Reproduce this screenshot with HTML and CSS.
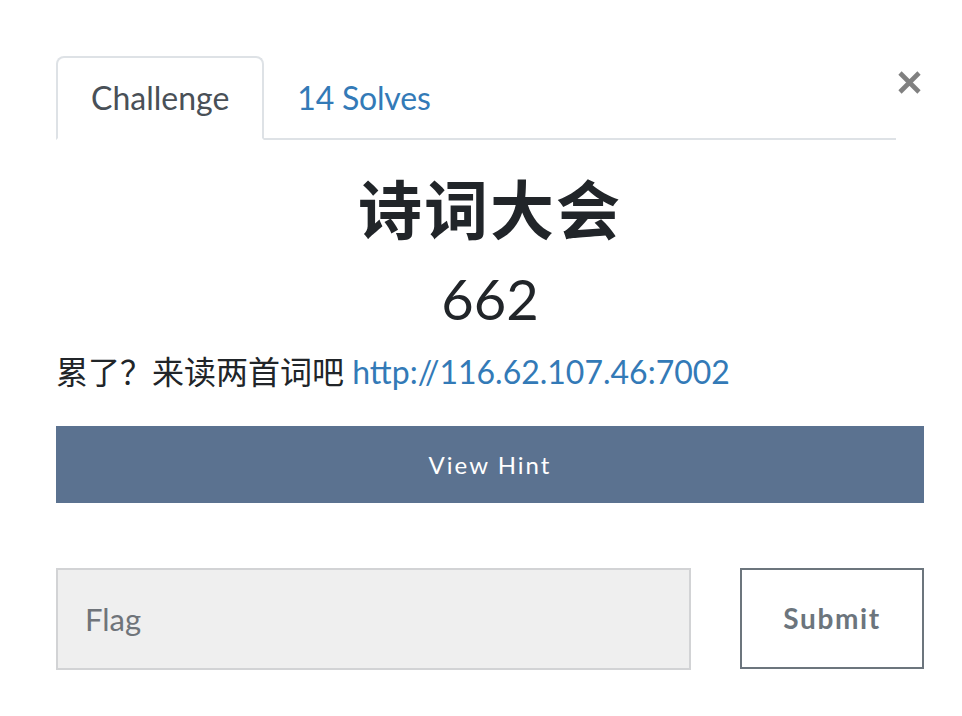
FILE: index.html
```html
<!DOCTYPE html>
<html>
<head>
    <meta charset="utf-8" />
    <title>诗词大会</title>
    <link rel="stylesheet" href="styles.css">
</head>
<body>
    <div class="modal">
        <div class="top">
            <ul class="tabs">
                <li class="tab active">Challenge</li>
                <li class="tab"><a href="#solves">14 Solves</a></li>
            </ul>
            <button class="close" aria-label="Close">
                <svg width="23" height="23" viewBox="0 0 23 23">
                    <path d="M2 2 L21 21 M21 2 L2 21" stroke="#808080" stroke-width="4.6" stroke-linecap="butt" fill="none" />
                </svg>
            </button>
        </div>

        <h2 class="challenge-name">诗词大会</h2>
        <h3 class="challenge-value">662</h3>
        <p class="challenge-desc">累了？来读两首词吧 <a href="http://116.62.107.46:7002">http://116.62.107.46:7002</a></p>

        <button class="hint">View Hint</button>

        <div class="submit-row">
            <input class="flag" type="text" placeholder="Flag">
            <button class="submit">Submit</button>
        </div>
    </div>
</body>
</html>
```

FILE: styles.css
```css
body {
    margin: 0;
    background: #fff;
    color: #212529;
    font-family: Lato, "Noto Sans CJK SC", sans-serif;
    font-size: 32px;
}

a {
    color: #337ab7;
    text-decoration: none;
}

.modal {
    width: 868px;
    margin: 56px 0 0 56px;
}

/* tabs row */
.top {
    display: flex;
}

.tabs {
    flex: 1;
    display: flex;
    margin: 0;
    padding: 0;
    list-style: none;
    border-bottom: 2px solid #dee2e6;
}

    .tab {
        margin-bottom: -2px;
        padding: 16px 33px;
        line-height: 48px;
        border: 2px solid transparent;
        border-radius: 8px 8px 0 0;
    }

    .tab.active {
        padding-right: 33px;
        color: #495057;
        background: #fff;
        border-color: #dee2e6 #dee2e6 #fff;
    }

    .tab a {
        margin-left: -2px;
        letter-spacing: -0.2px;
    }

.close {
    align-self: flex-start;
    margin: 15px 3px 0 2px;
    padding: 0;
    width: 23px;
    height: 23px;
    border: none;
    background: none;
}

    .close svg {
        display: block;
    }

/* challenge body */
.challenge-name {
    margin: 0 0 16px;
    padding-top: 32px;
    text-align: center;
    font-size: 64px;
    font-weight: 700;
    line-height: 1.2;
    letter-spacing: 2px;
}

.challenge-value {
    margin: 0 0 16px;
    text-align: center;
    font-size: 56px;
    font-weight: 400;
    line-height: 1.2;
}

.challenge-desc {
    margin: 0 0 30px;
    line-height: 48px;
}

.hint {
    display: block;
    width: 100%;
    height: 77px;
    padding: 0;
    border: none;
    background: #5b7290;
    color: #fff;
    font-family: Lato, sans-serif;
    font-size: 24px;
    letter-spacing: 2px;
}

.submit-row {
    display: flex;
    align-items: flex-start;
    gap: 49px;
    margin-top: 65px;
}

.flag {
    flex: 1;
    box-sizing: border-box;
    height: 102px;
    padding: 0 27px;
    border: 2px solid #d2d3d5;
    background: #efefef;
    color: #495057;
    font-family: Lato, sans-serif;
    font-size: 31px;
}

    .flag::placeholder {
        color: #6f747a;
    }

.submit {
    box-sizing: border-box;
    width: 184px;
    height: 101px;
    border: 2px solid #6c757d;
    background: #fff;
    color: #6c757d;
    font-family: Lato, sans-serif;
    font-size: 28px;
    font-weight: 700;
    letter-spacing: 1.6px;
}
```
